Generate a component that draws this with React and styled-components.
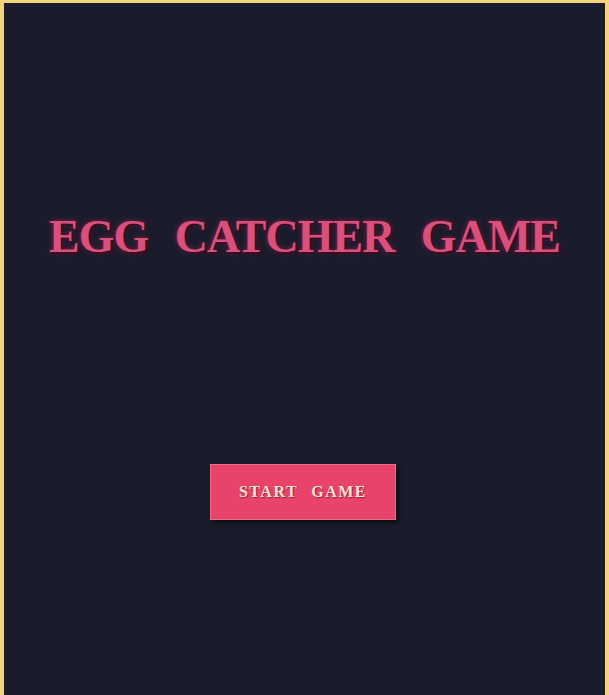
import React from "react";
import styled, { createGlobalStyle } from "styled-components";

const Global = createGlobalStyle`
  html, body { margin: 0; padding: 0; background: #1a1c2c; }
  body { font-family: "Liberation Serif", "Times New Roman", serif; }
`;

const Frame = styled.div`
  box-sizing: border-box;
  width: 609px;
  height: 720px;
  border: 4px solid #f1d47c;
  border-top-width: 3px;
  background: #1a1c2c;
  display: flex;
  flex-direction: column;
  align-items: center;
`;

const Title = styled.h1`
  margin: 206px 0 0;
  font-family: "Liberation Serif", "Times New Roman", serif;
  font-weight: bold;
  font-size: 46px;
  line-height: 56px;
  letter-spacing: -1px;
  word-spacing: 16px;
  color: #d9507c;
  text-shadow: 2px 2px 2px #3a0a20, 0 0 5px rgba(230, 40, 90, 0.55);
  white-space: nowrap;
`;

const StartButton = styled.button`
  margin: 199px 3px 0 0;
  width: 186px;
  height: 56px;
  border: 1px solid #f06b8a;
  background: #e8436a;
  color: #f6e4d6;
  font-family: "Liberation Serif", "Times New Roman", serif;
  font-weight: bold;
  font-size: 16px;
  letter-spacing: 1.5px;
  word-spacing: 8px;
  text-shadow: 1px 1px 1px rgba(90, 10, 30, 0.6);
  box-shadow: 3px 3px 4px rgba(0, 0, 0, 0.6);
  cursor: pointer;
`;

export default function App() {
  return (
    <>
      <Global />
      <Frame>
        <Title>EGG CATCHER GAME</Title>
        <StartButton>START GAME</StartButton>
      </Frame>
    </>
  );
}
